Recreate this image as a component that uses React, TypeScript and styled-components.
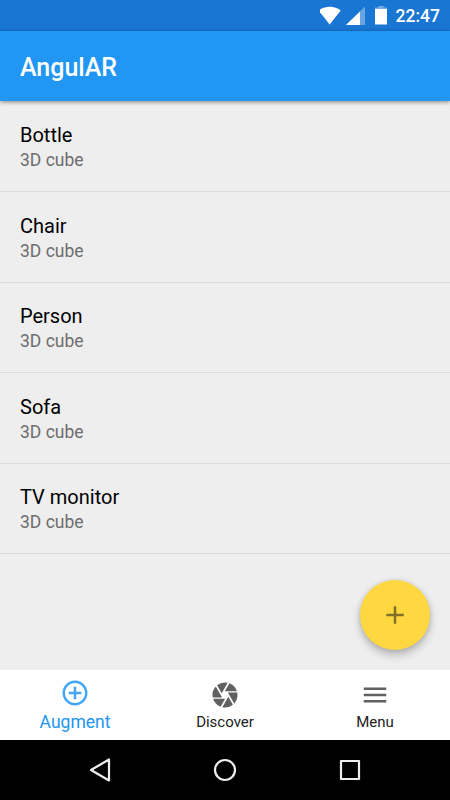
import React from "react";
import styled, { createGlobalStyle } from "styled-components";
import { MdAdd, MdAddCircleOutline, MdCamera, MdMenu } from "react-icons/md";

const GlobalStyle = createGlobalStyle`
  * { box-sizing: border-box; }
  body { margin: 0; font-family: Roboto, "Noto Sans", sans-serif; background: #eee; }
`;

const Screen = styled.div`
  position: relative;
  display: flex;
  flex-direction: column;
  width: 450px;
  height: 800px;
  overflow: hidden;
  background: #eeeeee;
`;

const StatusBar = styled.div`
  display: flex;
  flex: none;
  justify-content: flex-end;
  height: 31px;
  padding-right: 9px;
  background: #1976d2;
  color: #fff;
`;

const StatusIcons = styled.svg`
  display: block;
  width: 75px;
  height: 31px;
`;

const Clock = styled.span`
  width: 46px;
  padding-left: 0.5px;
  font-size: 17.5px;
  font-weight: 500;
  line-height: 33px;
  white-space: nowrap;
`;

const AppBar = styled.header`
  z-index: 1;
  display: flex;
  flex: none;
  align-items: center;
  height: 70px;
  padding: 4px 20px 0;
  background: #2196f3;
  box-shadow: 0 1px 4px rgba(0, 0, 0, 0.45);
`;

const Title = styled.h1`
  margin: 0;
  color: #fff;
  font-size: 25px;
  font-weight: 500;
  line-height: 30px;
`;

const List = styled.ul`
  flex: 1;
  margin: 0;
  padding: 0.4px 0 0;
  list-style: none;
`;

const Item = styled.li`
  height: 90.6px;
  padding: 21.6px 20px 0;
  border-bottom: 1px solid #dadada;
`;

const ItemName = styled.div`
  color: #000;
  font-size: 20px;
  line-height: 24px;
`;

const ItemDetail = styled.div`
  margin-top: 1.1px;
  color: #6d6d6d;
  font-size: 17.5px;
  line-height: 24px;
`;

const Fab = styled.button`
  position: absolute;
  right: 20px;
  bottom: 150px;
  display: flex;
  align-items: center;
  justify-content: center;
  width: 70px;
  height: 70px;
  padding: 0;
  border: 0;
  border-radius: 50%;
  background: #ffd740;
  color: #80702b;
  box-shadow: 0 5px 8px rgba(0, 0, 0, 0.24), 0 0 5px rgba(0, 0, 0, 0.1);
`;

const Tabs = styled.nav`
  display: grid;
  flex: none;
  grid-template-columns: repeat(3, 1fr);
  height: 70px;
  background: #fff;
`;

const Tab = styled.div<{ $active?: boolean }>`
  display: flex;
  flex-direction: column;
  align-items: center;
  padding-top: ${(p) => (p.$active ? "7.5px" : "10px")};
  color: ${(p) => (p.$active ? "#42a5f5" : "#616161")};
`;

const TabLabel = styled.span<{ $active?: boolean }>`
  margin-top: ${(p) => (p.$active ? "4px" : "2px")};
  color: ${(p) => (p.$active ? "#2196f3" : "#212121")};
  font-size: ${(p) => (p.$active ? "17.5px" : "15px")};
  line-height: 20px;
`;

const SystemBar = styled.div`
  display: flex;
  flex: none;
  align-items: center;
  justify-content: space-between;
  height: 60px;
  padding: 0 85px;
  background: #000;
`;

const SystemIcon = styled.svg`
  width: 30px;
  height: 30px;
  fill: none;
  stroke: #eee;
  stroke-width: 2.2;
  stroke-linejoin: round;
`;

const items = ["Bottle", "Chair", "Person", "Sofa", "TV monitor"];

const tabs = [
  { label: "Augment", Icon: MdAddCircleOutline, active: true },
  { label: "Discover", Icon: MdCamera, active: false },
  { label: "Menu", Icon: MdMenu, active: false },
];

export default function App() {
  return (
    <>
      <GlobalStyle />
      <Screen>
        <StatusBar>
          <StatusIcons viewBox="0 0 75 31" fill="#fff">
            <path d="M-1 10.5C5 5.5 15 5.5 21 10.5L10 24.5Z" transform="translate(-0.3 0)" />
            <path d="M45 6.5V25H26Z" opacity=".35" />
            <path d="M40 11.4V25H26Z" />
            <path d="M58.5 6h5v1.5h3.5v1.500H55V7.500h3.500Z" opacity=".4" />
            <path d="M55 9h12v15.500H55Z" />
          </StatusIcons>
          <Clock>22:47</Clock>
        </StatusBar>
        <AppBar>
          <Title>AngulAR</Title>
        </AppBar>
        <List>
          {items.map((name) => (
            <Item key={name}>
              <ItemName>{name}</ItemName>
              <ItemDetail>3D cube</ItemDetail>
            </Item>
          ))}
        </List>
        <Tabs>
          {tabs.map(({ label, Icon, active }) => (
            <Tab key={label} $active={active}>
              <Icon size={30} />
              <TabLabel $active={active}>{label}</TabLabel>
            </Tab>
          ))}
        </Tabs>
        <SystemBar>
          <SystemIcon viewBox="0 0 30 30">
            <path d="M6 15L24 4.500V25.500Z" />
          </SystemIcon>
          <SystemIcon viewBox="0 0 30 30">
            <circle cx="15" cy="15" r="10" />
          </SystemIcon>
          <SystemIcon viewBox="0 0 30 30">
            <rect x="6" y="6" width="18" height="18" />
          </SystemIcon>
        </SystemBar>
        <Fab aria-label="Add">
          <MdAdd size={30} />
        </Fab>
      </Screen>
    </>
  );
}
